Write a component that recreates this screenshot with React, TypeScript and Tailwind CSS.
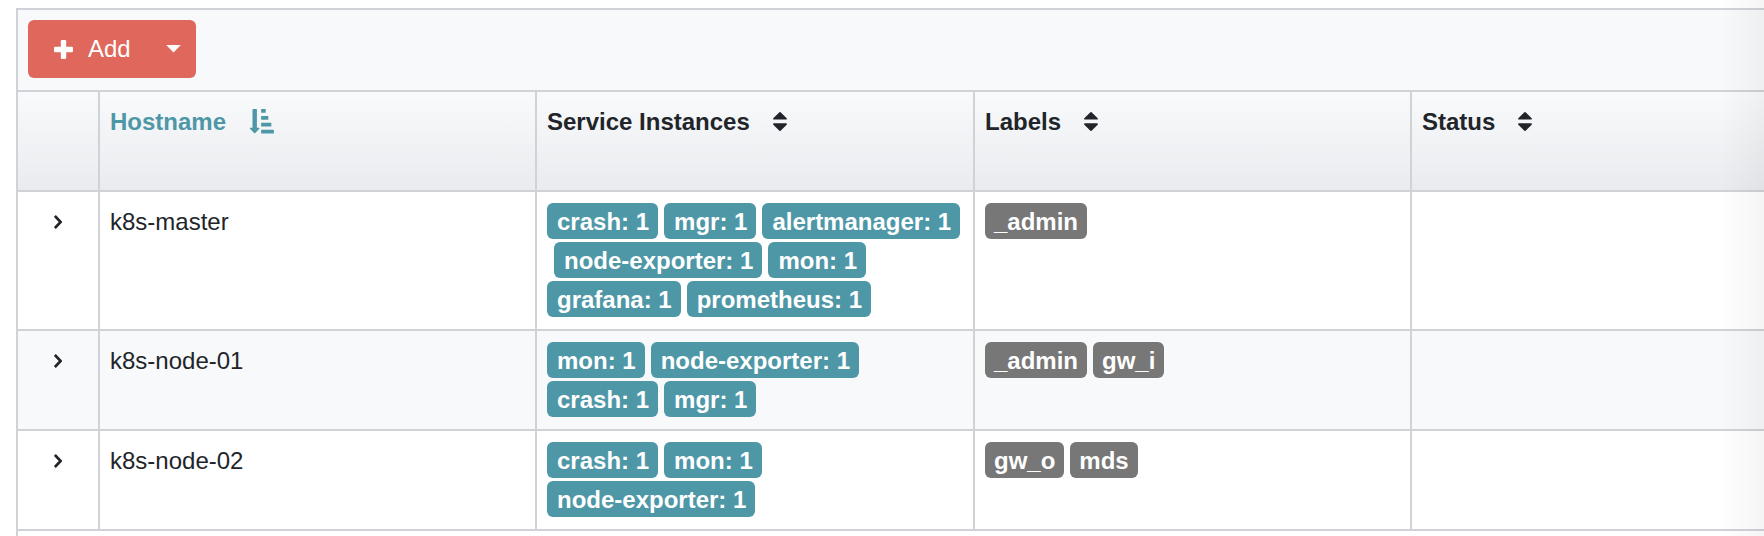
import React from "react";

type Host = { name: string; services: string[]; labels: string[] };

const hosts: Host[] = [
  {
    name: "k8s-master",
    services: ["crash: 1", "mgr: 1", "alertmanager: 1", "node-exporter: 1", "mon: 1", "grafana: 1", "prometheus: 1"],
    labels: ["_admin"],
  },
  {
    name: "k8s-node-01",
    services: ["mon: 1", "node-exporter: 1", "crash: 1", "mgr: 1"],
    labels: ["_admin", "gw_i"],
  },
  {
    name: "k8s-node-02",
    services: ["crash: 1", "mon: 1", "node-exporter: 1"],
    labels: ["gw_o", "mds"],
  },
];

const columns = ["Hostname", "Service Instances", "Labels", "Status"];

function PlusIcon() {
  return (
    <svg viewBox="0 0 19 19" className="size-[19px]" fill="currentColor" aria-hidden="true">
      <rect x="6.8" y="0" width="5.4" height="19" rx="1.2" />
      <rect x="0" y="6.8" width="19" height="5.4" rx="1.2" />
    </svg>
  );
}

function SortIcon() {
  return (
    <svg viewBox="0 0 14 19" className="h-[19px] w-[14px]" fill="currentColor" aria-hidden="true">
      <path d="M6.4 0.3Q7 -0.3 7.6 0.3L13.7 6.2Q14.2 7.6 13.2 7.6H0.8Q-0.2 7.6 0.3 6.2Z" />
      <path d="M6.4 18.7Q7 19.3 7.6 18.7L13.7 12.8Q14.2 11.2 13.2 11.2H0.8Q-0.2 11.2 0.3 12.8Z" />
    </svg>
  );
}

function SortAscendingIcon() {
  return (
    <svg viewBox="0 0 25 25" className="size-[25px]" fill="currentColor" aria-hidden="true">
      <path d="M4 0h3.4q.5 0 .5.5v18.3h2q1 .1.4 1L6.3 24q-.6.6-1.2 0L1 19.8q-.5-.9.4-1h2.1V.5q0-.5.5-.5z" />
      <rect x="12.1" y="0" width="4.6" height="3.7" rx="0.5" />
      <rect x="12.1" y="7" width="7.2" height="3.7" rx="0.5" />
      <rect x="12.1" y="13.8" width="10.2" height="3.7" rx="0.5" />
      <rect x="12.1" y="20.7" width="12.8" height="3.7" rx="0.5" />
    </svg>
  );
}

function Badges({ items, tone }: { items: string[]; tone: "info" | "neutral" }) {
  const color = tone === "info" ? "bg-[#4e97a7] pr-[9px] pl-[10px]" : "bg-[#777777] px-[9px]";
  return (
    <div className="flex flex-wrap gap-x-[6px] gap-y-[3px] pt-px">
      {items.map((item, i) => (
        <span
          key={item}
          className={`rounded-md pt-0.5 font-bold leading-[34px] whitespace-nowrap text-white ${color} ${
            items.length > 4 && i === 3 ? "ml-[7px]" : ""
          }`}
        >
          {item}
        </span>
      ))}
    </div>
  );
}

function HeaderCell({ title, sorted }: { title: string; sorted: boolean }) {
  return (
    <th
      scope="col"
      aria-sort={sorted ? "ascending" : "none"}
      className="h-[100px] border-r-2 border-b-2 border-[#cfd2d6] bg-linear-to-b from-[#f8fafc] to-[#e9ebee] p-[10px] text-left align-top last:border-r-0"
    >
      <button
        type="button"
        className={`flex items-center gap-[23px] font-bold leading-[39px] ${sorted ? "text-[#4e97a7]" : ""}`}
      >
        {title}
        {sorted ? <SortAscendingIcon /> : <SortIcon />}
      </button>
    </th>
  );
}

export default function App() {
  return (
    <main className="relative flex min-h-screen flex-col bg-white pt-2 pl-4 font-['Liberation_Sans',Arial,sans-serif] text-2xl text-[#212529]">
      <section className="flex flex-1 flex-col border-t-2 border-l-2 border-[#cfd2d6]">
        <div className="border-b-2 border-[#cfd2d6] bg-[#f8f9fb] px-[10px] pt-[10px] pb-3">
          <div className="inline-flex h-[58px] items-stretch rounded-md bg-[#df675b] align-top text-white">
            <button type="button" className="flex items-center gap-[15px] pr-[15px] pl-[26px] leading-9">
              <PlusIcon />
              Add
            </button>
            <button type="button" aria-label="More actions" className="flex items-center pr-[15px] pl-5">
              <svg viewBox="0 0 15 8" className="h-2 w-[15px]" fill="currentColor" aria-hidden="true">
                <path d="M0.2 0h14.6L7.5 7.6z" />
              </svg>
            </button>
          </div>
        </div>

        <table className="w-full table-fixed border-separate border-spacing-0">
          <colgroup>
            <col className="w-[82px]" />
            <col className="w-[437px]" />
            <col className="w-[438px]" />
            <col className="w-[437px]" />
            <col />
          </colgroup>
          <thead>
            <tr>
              <td className="border-r-2 border-b-2 border-[#cfd2d6] bg-linear-to-b from-[#f8fafc] to-[#e9ebee]" />
              {columns.map((c, i) => (
                <HeaderCell key={c} title={c} sorted={i === 0} />
              ))}
            </tr>
          </thead>
          <tbody className="[&_td]:border-r-2 [&_td]:border-b-2 [&_td]:border-[#cfd2d6] [&_td]:p-[10px] [&_td]:pb-3 [&_td]:align-top [&_td:last-child]:border-r-0">
            {hosts.map((h) => (
              <tr key={h.name} className="even:bg-[#f8f9fb]">
                <td>
                  <button
                    type="button"
                    aria-label={`Expand ${h.name}`}
                    className="mx-auto flex h-[39px] w-6 items-center justify-center"
                  >
                    <svg viewBox="0 0 8 14" className="h-[14px] w-2" fill="none" stroke="currentColor" strokeWidth="2.6" aria-hidden="true">
                      <path d="M0.9 1L6.6 7l-5.7 6" />
                    </svg>
                  </button>
                </td>
                <td className="leading-[39px]">{h.name}</td>
                <td>
                  <Badges items={h.services} tone="info" />
                </td>
                <td>
                  <Badges items={h.labels} tone="neutral" />
                </td>
                <td />
              </tr>
            ))}
          </tbody>
        </table>
      </section>
      <div className="pointer-events-none absolute inset-y-0 right-0 w-11 bg-linear-to-r from-black/0 to-black/4" />
    </main>
  );
}
